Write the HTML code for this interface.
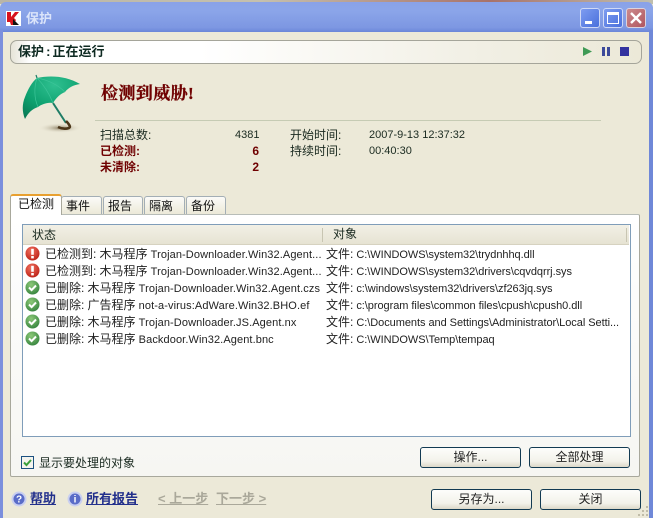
<!DOCTYPE html>
<html><head><meta charset="utf-8">
<style>
html,body{margin:0;padding:0}
body{width:653px;height:518px;position:relative;overflow:hidden;background:#ece9d8;font:12px "Liberation Sans","Noto Sans CJK SC",sans-serif;color:#1a2a20}
.a{position:absolute;white-space:nowrap;line-height:14px}
.b{font-weight:bold}
.r{color:#6f0000;font-weight:bold}
.tab{position:absolute;top:196px;height:18px;background:linear-gradient(#fbfbf8,#ece9d8);border:1px solid #a3aeb5;border-bottom:none;border-radius:3px 3px 0 0;box-sizing:border-box;padding-left:4px;font-size:12px;line-height:19px;color:#111}
.btn{position:absolute;height:21px;box-sizing:border-box;border:1px solid #123a52;border-radius:3px;background:linear-gradient(#fdfdfb,#f3f2ea 70%,#dcd8c8);text-align:center;font-size:12px;line-height:19px;color:#222}
.row{position:absolute;left:45px;white-space:nowrap;height:17px;line-height:17px;color:#222;font-size:12px}
.row2{position:absolute;left:326px;white-space:nowrap;height:17px;line-height:17px;color:#222;font-size:12px}
.l{font-size:11px;letter-spacing:.1px}
.row2 .l{letter-spacing:-.05px}
.ic{position:absolute;left:25px;width:15px;height:15px}
.lnk{font-size:13px;line-height:16px;text-decoration:underline}
</style></head><body>
<div style="position:absolute;left:0;top:0;width:653px;height:4px;background:linear-gradient(90deg,#b9b5a7,#c5c0ae 40%,#a8726a 75%,#c0bfae)"></div>
<div style="position:absolute;left:0;top:2px;width:653px;height:30px;background:linear-gradient(#8aa2e8,#8ba5e9 30%,#7d97e2 85%,#6b86d8);border-radius:6px 6px 0 0"></div>
<div style="position:absolute;left:0;top:30px;width:3px;height:488px;background:#7b8fdd"></div>
<div style="position:absolute;left:649px;top:30px;width:4px;height:488px;background:#6f88d8"></div>
<svg style="position:absolute;left:6px;top:11px" width="15" height="15" viewBox="0 0 15 15"><rect width="15" height="15" fill="#fff"/><path d="M1 1h4v5l4-5h4l-5 6 2 2-3 5H5l-1-3H1z" fill="#d8121e"/><path d="M7 8l6 6H7z" fill="#111"/></svg>
<div class="a b" style="left:26px;top:10px;font-size:13px;line-height:17px;color:#dbe4fa">保护</div>
<div style="position:absolute;left:580px;top:8px;width:20px;height:20px;border:1px solid #cfd9f6;box-sizing:border-box;border-radius:3px;background:linear-gradient(135deg,#7d9cf0,#4a70dc)"><div style="position:absolute;left:4px;top:12px;width:7px;height:3px;background:#fff"></div></div>
<div style="position:absolute;left:603px;top:8px;width:20px;height:20px;border:1px solid #cfd9f6;box-sizing:border-box;border-radius:3px;background:linear-gradient(135deg,#7d9cf0,#4a70dc)"><div style="position:absolute;left:3px;top:3px;width:10px;height:8px;border:1px solid #fff;border-top-width:3px"></div></div>
<div style="position:absolute;left:626px;top:8px;width:20px;height:20px;border:1px solid #dcd3dc;box-sizing:border-box;border-radius:3px;background:linear-gradient(135deg,#cc8a8c,#b0565f)"><svg width="18" height="18" style="position:absolute;left:0;top:0"><path d="M4 4l10 10M14 4L4 14" stroke="#fff" stroke-width="2.400"/></svg></div>

<div style="position:absolute;left:10px;top:40px;width:632px;height:24px;box-sizing:border-box;border:1px solid #a5a59a;border-radius:7px;background:linear-gradient(90deg,#e6e4d8,#fff 3%,#fff 30%,#f1efe4 75%,#ece9d8)"></div>
<div class="a b" style="left:18px;top:44px;font-size:13px;line-height:16px;word-spacing:-1.500px;color:#0e2a22">保护 : 正在运行</div>
<svg style="position:absolute;left:582px;top:46px" width="50" height="12"><path d="M1 1l9 4.500-9 4.500z" fill="#3f9a55"/><rect x="20" y="1" width="3" height="9" fill="#3d4a9a"/><rect x="25" y="1" width="3" height="9" fill="#3d4a9a"/><rect x="38" y="1" width="9" height="9" fill="#33339f"/></svg>

<svg style="position:absolute;left:20px;top:72px" width="64" height="66" viewBox="0 0 64 66">
<defs><radialGradient id="u" cx=".55" cy=".2" r=".9"><stop offset="0" stop-color="#2fc090"/><stop offset=".6" stop-color="#0ca06e"/><stop offset="1" stop-color="#087a55"/></radialGradient><radialGradient id="s"><stop offset="0" stop-color="#6a5a3a" stop-opacity=".75"/><stop offset="1" stop-color="#ece9d8" stop-opacity="0"/></radialGradient></defs>
<ellipse cx="40" cy="56" rx="22" ry="5" fill="url(#s)"/>
<path d="M33 31L46 51" stroke="#1f7d66" stroke-width="2"/>
<path d="M46 49c3 3 5 6 3 7-3 1-7 1-11-1" stroke="#4a3518" stroke-width="2.600" fill="none"/>
<path d="M17 6C30 3 47 4 60 12 53 13 48 16 45 20 40 22 36 26 33 31 28 30 22 32 18 35 12 37 8 41 5 47 2 40 2 32 5 25 8 17 12 10 17 6z" fill="url(#u)"/>
<path d="M17 6C14 15 14 26 18 35M17 6C24 13 29 21 33 31M17 6C28 8 38 13 45 20" stroke="#3cc498" stroke-width=".7" fill="none"/>
<path d="M17 6l-1-3" stroke="#1f7d66" stroke-width="1.200"/>
</svg>

<div class="a r" style="left:101px;top:84px;font-size:17px;line-height:20px;letter-spacing:.4px;font-family:'Liberation Serif','Noto Serif CJK SC',serif;-webkit-text-stroke:.3px #6f0000">检测到威胁!</div>
<div style="position:absolute;left:95px;top:120px;width:506px;height:1px;background:#c6cbb4"></div>

<div class="a" style="left:100px;top:128px">扫描总数:</div>
<div class="a" style="left:235px;top:128px;width:24px;text-align:right;font-size:11px">4381</div>
<div class="a r" style="left:100px;top:144px">已检测:</div>
<div class="a r" style="left:235px;top:144px;width:24px;text-align:right">6</div>
<div class="a r" style="left:100px;top:160px">未清除:</div>
<div class="a r" style="left:235px;top:160px;width:24px;text-align:right">2</div>
<div class="a" style="left:290px;top:128px">开始时间:</div>
<div class="a" style="left:369px;top:128px;font-size:11px">2007-9-13 12:37:32</div>
<div class="a" style="left:290px;top:144px">持续时间:</div>
<div class="a" style="left:369px;top:144px;font-size:11px">00:40:30</div>

<div style="position:absolute;left:10px;top:214px;width:630px;height:263px;box-sizing:border-box;border:1px solid #a8a89c;border-top-color:#b8bdb8;background:linear-gradient(#fff,#f6f6f2);border-radius:0 2px 2px 2px"></div>
<div class="tab" style="left:61px;width:41px">事件</div>
<div class="tab" style="left:103px;width:40px">报告</div>
<div class="tab" style="left:144px;width:41px">隔离</div>
<div class="tab" style="left:186px;width:40px">备份</div>
<div style="position:absolute;left:10px;top:194px;width:52px;height:21px;box-sizing:border-box;border:1px solid #a8a89c;border-bottom:none;border-top:2px solid #e8a030;border-radius:3px 3px 0 0;background:#fff;text-align:center;font-size:12px;line-height:16px;color:#111">已检测</div>

<div style="position:absolute;left:22px;top:224px;width:609px;height:213px;box-sizing:border-box;border:1px solid #7f9db9;background:#fff"></div>
<div style="position:absolute;left:23px;top:225px;width:606px;height:19px;background:linear-gradient(#f2f0e6,#e6e3d3);border-bottom:1px solid #d6d2c0"></div>
<div style="position:absolute;left:322px;top:228px;width:1px;height:14px;background:#c8c5b2"></div>
<div style="position:absolute;left:626px;top:228px;width:1px;height:14px;background:#c8c5b2"></div>
<div class="a" style="left:32px;top:228px;font-size:12px">状态</div>
<div class="a" style="left:333px;top:227px;font-size:12px">对象</div>

<svg width="0" height="0" style="position:absolute"><defs>
<radialGradient id="rd" cx=".4" cy=".3" r=".8"><stop offset="0" stop-color="#f07060"/><stop offset="1" stop-color="#b81a10"/></radialGradient>
<radialGradient id="gr" cx=".4" cy=".3" r=".8"><stop offset="0" stop-color="#8cc878"/><stop offset="1" stop-color="#2f7f3a"/></radialGradient>
<g id="err"><circle cx="7.500" cy="7.500" r="7" fill="url(#rd)"/><rect x="6.200" y="2.800" width="2.600" height="6" fill="#fff"/><rect x="6.200" y="10" width="2.600" height="2.400" fill="#fff"/></g>
<g id="ok"><circle cx="7.500" cy="7.500" r="7" fill="url(#gr)"/><path d="M4 7.500l2.600 2.600L11 5.500" stroke="#fff" stroke-width="2" fill="none"/></g>
</defs></svg>

<svg class="ic" style="top:246px"><use href="#err"/></svg>
<svg class="ic" style="top:263px"><use href="#err"/></svg>
<svg class="ic" style="top:280px"><use href="#ok"/></svg>
<svg class="ic" style="top:297px"><use href="#ok"/></svg>
<svg class="ic" style="top:314px"><use href="#ok"/></svg>
<svg class="ic" style="top:331px"><use href="#ok"/></svg>

<div class="row" style="top:246px">已检测到:<span class="l"> </span>木马程序<span class="l"> Trojan-Downloader.Win32.Agent...</span></div>
<div class="row" style="top:263px">已检测到:<span class="l"> </span>木马程序<span class="l"> Trojan-Downloader.Win32.Agent...</span></div>
<div class="row" style="top:280px">已删除:<span class="l"> </span>木马程序<span class="l"> Trojan-Downloader.Win32.Agent.czs</span></div>
<div class="row" style="top:297px">已删除:<span class="l"> </span>广告程序<span class="l"> not-a-virus:AdWare.Win32.BHO.ef</span></div>
<div class="row" style="top:314px">已删除:<span class="l"> </span>木马程序<span class="l"> Trojan-Downloader.JS.Agent.nx</span></div>
<div class="row" style="top:331px">已删除:<span class="l"> </span>木马程序<span class="l"> Backdoor.Win32.Agent.bnc</span></div>
<div class="row2" style="top:246px">文件:<span class="l"> C:\WINDOWS\system32\trydnhhq.dll</span></div>
<div class="row2" style="top:263px">文件:<span class="l"> C:\WINDOWS\system32\drivers\cqvdqrrj.sys</span></div>
<div class="row2" style="top:280px">文件:<span class="l"> c:\windows\system32\drivers\zf263jq.sys</span></div>
<div class="row2" style="top:297px">文件:<span class="l"> c:\program files\common files\cpush\cpush0.dll</span></div>
<div class="row2" style="top:314px">文件:<span class="l"> C:\Documents and Settings\Administrator\Local Setti...</span></div>
<div class="row2" style="top:331px">文件:<span class="l"> C:\WINDOWS\Temp\tempaq</span></div>

<div style="position:absolute;left:21px;top:456px;width:13px;height:13px;box-sizing:border-box;border:1px solid #1c5180;background:#f4f4ee"><svg width="11" height="11" style="position:absolute;left:0;top:0"><path d="M2 5.500l2.500 2.500L9 3" stroke="#3aa03a" stroke-width="2" fill="none"/></svg></div>
<div class="a" style="left:39px;top:455px;font-size:12px;line-height:16px">显示要处理的对象</div>
<div class="btn" style="left:420px;top:447px;width:101px">操作...</div>
<div class="btn" style="left:529px;top:447px;width:101px">全部处理</div>
<div class="btn" style="left:431px;top:489px;width:101px">另存为...</div>
<div class="btn" style="left:540px;top:489px;width:101px">关闭</div>

<svg style="position:absolute;left:11px;top:491px" width="16" height="16"><circle cx="8" cy="8" r="7.500" fill="#c9cff0"/><circle cx="8" cy="8" r="5.500" fill="#5a6cc8"/><text x="8" y="11.500" font-size="10" font-weight="bold" text-anchor="middle" fill="#fff" font-family="Liberation Sans">?</text></svg>
<div class="a b lnk" style="left:30px;top:491px;color:#23308c">帮助</div>
<svg style="position:absolute;left:67px;top:491px" width="16" height="16"><circle cx="8" cy="8" r="7.500" fill="#c9cff0"/><circle cx="8" cy="8" r="5.500" fill="#5a6cc8"/><text x="8" y="11.500" font-size="10" font-weight="bold" text-anchor="middle" fill="#fff" font-family="Liberation Sans">i</text></svg>
<div class="a b lnk" style="left:86px;top:491px;color:#23308c">所有报告</div>
<div class="a b lnk" style="left:158px;top:491px;color:#aaa89a">&lt; 上一步</div>
<div class="a b lnk" style="left:216px;top:491px;color:#aaa89a">下一步 &gt;</div>
<svg style="position:absolute;left:638px;top:503px" width="11" height="15"><g fill="#c0bca8"><rect x="8" y="3" width="2" height="2"/><rect x="4" y="7" width="2" height="2"/><rect x="8" y="7" width="2" height="2"/><rect x="0" y="11" width="2" height="2"/><rect x="4" y="11" width="2" height="2"/><rect x="8" y="11" width="2" height="2"/></g></svg>
</body></html>
